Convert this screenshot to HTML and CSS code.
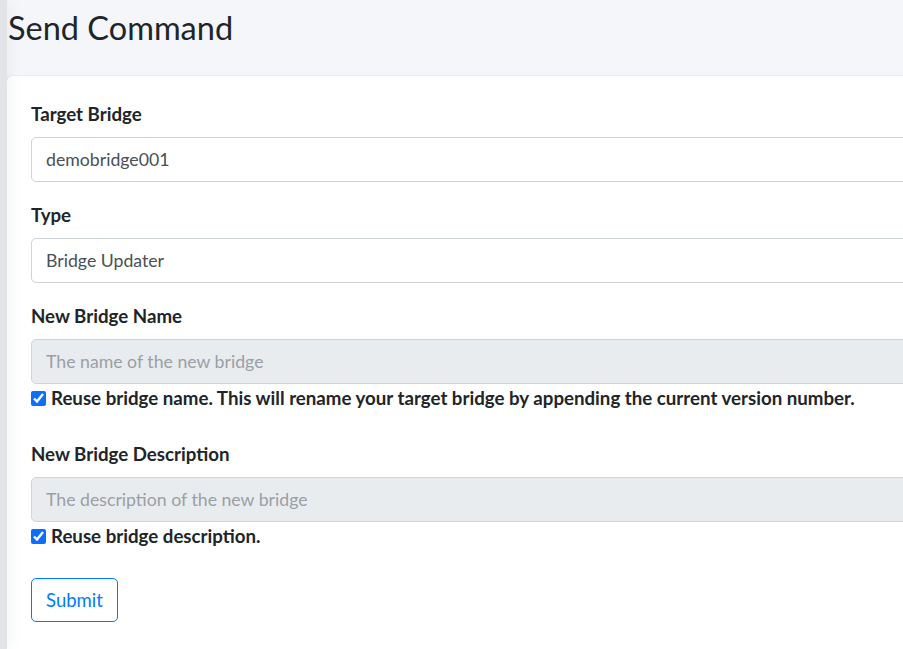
FILE: index.html
```html
<!DOCTYPE html>
<html>
<head>
<meta charset="utf-8">
<link rel="stylesheet" href="styles.css">
</head>
<body>
<div class="sidebar-edge"></div>
<main class="content">
  <h1 class="page-title">Send Command</h1>
  <section class="card">
    <form class="card-body">
      <div class="form-group">
        <label class="field-label">Target Bridge</label>
        <div class="input">demobridge001</div>
      </div>
      <div class="form-group">
        <label class="field-label">Type</label>
        <div class="input">Bridge Updater</div>
      </div>
      <div class="form-group">
        <label class="field-label">New Bridge Name</label>
        <div class="input disabled">The name of the new bridge</div>
        <label class="check-row"><input type="checkbox" class="check" checked><span>Reuse bridge name. This will rename your target bridge by appending the current version number.</span></label>
      </div>
      <div class="form-group">
        <label class="field-label">New Bridge Description</label>
        <div class="input disabled">The description of the new bridge</div>
        <label class="check-row"><input type="checkbox" class="check" checked><span>Reuse bridge description.</span></label>
      </div>
      <button type="button" class="btn-submit">Submit</button>
    </form>
  </section>
</main>
</body>
</html>
```

FILE: styles.css
```css
html, body {
  margin: 0;
  padding: 0;
}
body {
  background: #f4f6f9;
  overflow: hidden;
  display: flex;
  width: 903px;
  height: 649px;
  font-family: Lato, "Liberation Sans", sans-serif;
  color: #212529;
}
.sidebar-edge {
  flex: none;
  width: 7px;
  background: #e3e4e7;
  box-shadow: 2px 0 14px rgba(0, 0, 0, 0.07);
  position: relative;
  z-index: 2;
}
.content {
  flex: none;
  width: 1300px;
}
.page-title {
  margin: 0;
  padding: 9px 0 0 1px;
  height: 57px;
  font-size: 32.5px;
  font-weight: 400;
  line-height: 38px;
  color: #212529;
}
.card {
  margin-top: 10px;
  background: #fff;
  border-radius: 5px;
  box-shadow: 0 0 1px rgba(0,0,0,.2), 0 1px 3px rgba(0,0,0,.15);
}
.card-body {
  padding: 25px 24px 40px 24px;
  display: flex;
  flex-direction: column;
}
.form-group {
  display: flex;
  flex-direction: column;
  margin-bottom: 20px;
}
.form-group:nth-child(3) {
  margin-bottom: 30px;
}
.form-group:nth-child(4) {
  margin-bottom: 29px;
}
.field-label {
  font-weight: 700;
  font-size: 18.7px;
  line-height: 26px;
  margin-bottom: 10px;
}
.input {
  height: 43px;
  border: 1px solid #ced4da;
  border-radius: 5px;
  padding: 0 14px;
  font-size: 17.7px;
  line-height: 43px;
  color: #495057;
  background: #fff;
}
.input.disabled {
  background: #e9ecef;
  color: #999fa5;
}
.check-row {
  display: flex;
  align-items: center;
  gap: 5px;
  height: 26px;
  margin-top: 1px;
  font-weight: 700;
  font-size: 18.7px;
}
.check {
  margin: 0;
  width: 15px;
  height: 15px;
  accent-color: #0b6efd;
}
.btn-submit {
  align-self: flex-start;
  width: 87px;
  height: 44px;
  border: 1px solid #007bff;
  border-radius: 5px;
  background: #fff;
  color: #007bff;
  font-family: inherit;
  font-size: 18.5px;
  padding: 0;
}
```
